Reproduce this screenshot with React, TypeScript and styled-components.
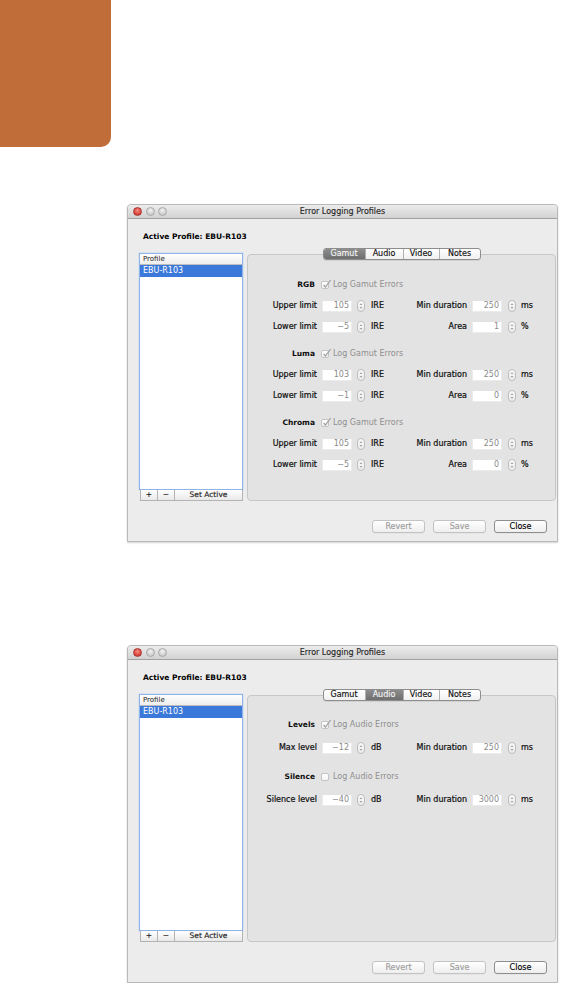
import React from 'react';
import styled, { createGlobalStyle } from 'styled-components';

const Global = createGlobalStyle`
  html, body { margin: 0; padding: 0; background: #fff; }
  body {
    font-family: "DejaVu Sans", Verdana, sans-serif;
    width: 567px; height: 983px; overflow: hidden;
  }
`;

const Page = styled.div`
  width: 567px;
  height: 983px;
  display: flex;
  flex-direction: column;
`;

const ChapterTab = styled.div`
  flex: none;
  width: 111px;
  height: 147px;
  background: #c06d3a;
  border-bottom-right-radius: 10px;
`;

const Win = styled.div<{ $top: number }>`
  flex: none;
  margin: ${(p) => p.$top}px 0 0 127px;
  width: 431px;
  height: 338px;
  box-sizing: border-box;
  border: 1px solid #b9b9b9;
  border-radius: 4px 4px 0 0;
  background: #ececec;
  box-shadow: 0 1px 2px rgba(0, 0, 0, 0.18);
  display: flex;
  flex-direction: column;
  overflow: hidden;
`;

const TitleBar = styled.div`
  flex: none;
  height: 13px;
  display: grid;
  grid-template-columns: 1fr auto 1fr;
  align-items: center;
  background: linear-gradient(#ececec, #d2d2d2);
  border-bottom: 1px solid #a2a2a2;
`;

const Lights = styled.div`
  display: flex;
  gap: 3.5px;
  padding-left: 5px;
`;

const Light = styled.span<{ $red?: boolean }>`
  width: 9px;
  height: 9px;
  box-sizing: border-box;
  border-radius: 50%;
  background: ${(p) =>
    p.$red
      ? 'radial-gradient(circle at 50% 35%, #f48a80, #d8403a 70%)'
      : 'radial-gradient(circle at 50% 35%, #f2f2f2, #cdcdcd 70%)'};
  border: 1px solid ${(p) => (p.$red ? '#a8322c' : '#a9a9a9')};
`;

const Title = styled.div`
  font-size: 8px;
  color: #2a2a2a;
  line-height: 13px;
  -webkit-text-stroke: 0.15px #2a2a2a;
`;

const Body = styled.div`
  flex: 1;
  display: flex;
  flex-direction: column;
  padding: 0 10px 0 11px;
`;

const ActiveProfile = styled.div`
  margin: 13px 0 0 4px;
  height: 10px;
  line-height: 10px;
  font-size: 7.5px;
  font-weight: bold;
  color: #000;
`;

const Main = styled.div`
  margin-top: 6px;
  display: grid;
  grid-template-columns: 104px 309px;
  column-gap: 4px;
  align-items: start;
`;

const ListColumn = styled.div`
  margin-top: 5px;
  display: flex;
  flex-direction: column;
`;

const ListBox = styled.div`
  height: 237px;
  box-sizing: border-box;
  border: 1px solid #8fb3e6;
  box-shadow: 0 0 0 0.5px #c5d8f2;
  background: #fff;
  display: flex;
  flex-direction: column;
`;

const ListHeader = styled.div`
  height: 10px;
  line-height: 10px;
  font-size: 7px;
  color: #222;
  padding-left: 3px;
  background: linear-gradient(#ffffff, #eeeeee);
  border-bottom: 1px solid #bdbdbd;
`;

const ListRow = styled.div<{ $selected?: boolean }>`
  height: 12px;
  line-height: 12px;
  font-size: 8px;
  padding-left: 3px;
  color: ${(p) => (p.$selected ? '#fff' : '#111')};
  background: ${(p) => (p.$selected ? '#3a78d9' : 'transparent')};
`;

const ListBar = styled.div`
  display: grid;
  grid-template-columns: 17px 17px 1fr;
  height: 11px;
  margin-left: 1px;
  box-sizing: border-box;
  border: 1px solid #b3b3b3;
  border-top: none;
  background: linear-gradient(#ffffff, #e9e9e9);
`;

const BarButton = styled.div<{ $last?: boolean }>`
  font-size: 7.5px;
  line-height: 10px;
  text-align: center;
  color: #222;
  border-right: ${(p) => (p.$last ? 'none' : '1px solid #b3b3b3')};
  -webkit-text-stroke: 0.15px #222;
`;

const TabColumn = styled.div`
  display: flex;
  flex-direction: column;
`;

const Segments = styled.div`
  position: relative;
  z-index: 1;
  align-self: center;
  display: flex;
  height: 12px;
  box-sizing: border-box;
  border: 1px solid #8d8d8d;
  border-radius: 3px;
  overflow: hidden;
  background: linear-gradient(#ffffff, #f0f0f0);
  box-shadow: 0 1px 0 rgba(0, 0, 0, 0.08);
`;

const Segment = styled.div<{ $w: number; $active?: boolean; $last?: boolean }>`
  width: ${(p) => p.$w}px;
  box-sizing: border-box;
  text-align: center;
  font-size: 8px;
  line-height: 10px;
  color: ${(p) => (p.$active ? '#f4f4f4' : '#111')};
  -webkit-text-stroke: 0.15px ${(p) => (p.$active ? '#f4f4f4' : '#111')};
  background: ${(p) => (p.$active ? 'linear-gradient(#8d8d8d, #6e6e6e)' : 'transparent')};
  border-right: ${(p) => (p.$last ? 'none' : '1px solid #b0b0b0')};
`;

const Panel = styled.div`
  margin-top: -6px;
  height: 247px;
  box-sizing: border-box;
  border: 1px solid #c7c7c7;
  border-radius: 4px;
  background: #e3e3e3;
  padding-top: 19px;
  display: flex;
  flex-direction: column;
`;

const Section = styled.div<{ $gap: number }>`
  display: flex;
  flex-direction: column;
  & + & { margin-top: ${(p) => p.$gap}px; }
`;

const Row = styled.div<{ $h: number }>`
  height: ${(p) => p.$h}px;
  display: flex;
  align-items: center;
`;

const Label = styled.span<{ $w: number; $bold?: boolean }>`
  flex: none;
  width: ${(p) => p.$w}px;
  text-align: right;
  font-size: ${(p) => (p.$bold ? '7.5px' : '8px')};
  font-weight: ${(p) => (p.$bold ? 'bold' : 'normal')};
  color: #0d0d0d;
  white-space: nowrap;
  -webkit-text-stroke: ${(p) => (p.$bold ? '0' : '0.2px #0d0d0d')};
`;

const CheckBox = styled.span`
  flex: none;
  position: relative;
  margin-left: 6px;
  width: 8px;
  height: 8px;
  box-sizing: border-box;
  border: 1px solid #c4c4c4;
  border-radius: 2px;
  background: linear-gradient(#ffffff, #f3f3f3);
  svg { position: absolute; left: 0; top: -3px; }
`;

const CheckText = styled.span`
  margin-left: 4px;
  font-size: 8px;
  color: #8f8f8f;
`;

const Input = styled.span<{ $ml: number }>`
  flex: none;
  margin-left: ${(p) => p.$ml}px;
  width: 30px;
  height: 12px;
  box-sizing: border-box;
  background: #fff;
  border: 1px solid #ebebeb;
  border-top-color: #e2e2e2;
  text-align: right;
  padding-right: 2px;
  font-size: 8px;
  line-height: 10px;
  color: #8a8a8a;
`;

const Stepper = styled.span<{ $ml: number }>`
  flex: none;
  margin-left: ${(p) => p.$ml}px;
  width: 8px;
  height: 12px;
  box-sizing: border-box;
  border: 1px solid #bdbdbd;
  border-radius: 4px;
  background: linear-gradient(#fafafa, #ececec);
  display: flex;
  align-items: center;
  justify-content: center;
`;

const Unit = styled.span<{ $w: number; $ml: number }>`
  flex: none;
  margin-left: ${(p) => p.$ml}px;
  width: ${(p) => p.$w}px;
  font-size: 8px;
  color: #0d0d0d;
  -webkit-text-stroke: 0.2px #0d0d0d;
`;

const Footer = styled.div`
  margin-top: 19px;
  display: flex;
  justify-content: flex-end;
  gap: 8px;
`;

const PushButton = styled.div<{ $enabled?: boolean }>`
  width: 53px;
  height: 13px;
  box-sizing: border-box;
  border: 1px solid ${(p) => (p.$enabled ? '#8e8e8e' : '#c3c3c3')};
  border-radius: 3px;
  background: linear-gradient(#ffffff, #eeeeee);
  text-align: center;
  font-size: 8px;
  line-height: 11px;
  color: ${(p) => (p.$enabled ? '#000' : '#9c9c9c')};
  -webkit-text-stroke: 0.15px ${(p) => (p.$enabled ? '#000' : '#9c9c9c')};
  box-shadow: 0 0.5px 0 rgba(0, 0, 0, 0.06);
`;

const Arrows = () => (
  <svg width="4" height="8" viewBox="0 0 4 8">
    <path d="M0.5 3 L2 1.3 L3.5 3 Z" fill="#a0a0a0" />
    <path d="M0.5 5 L2 6.7 L3.5 5 Z" fill="#a0a0a0" />
  </svg>
);

const Tick = () => (
  <svg width="10" height="10" viewBox="0 0 10 10">
    <path d="M1.6 5.8 L3.4 8 L8.6 1" fill="none" stroke="#9a9a9a" strokeWidth="1.1" />
  </svg>
);

type Field = { label: string; v1: string; u1: string; label2: string; v2: string; u2: string };
type Group = { title: string; check: string; checked: boolean; rows: Field[] };

const gamutGroups: Group[] = [
  {
    title: 'RGB', check: 'Log Gamut Errors', checked: true,
    rows: [
      { label: 'Upper limit', v1: '105', u1: 'IRE', label2: 'Min duration', v2: '250', u2: 'ms' },
      { label: 'Lower limit', v1: '−5', u1: 'IRE', label2: 'Area', v2: '1', u2: '%' },
    ],
  },
  {
    title: 'Luma', check: 'Log Gamut Errors', checked: true,
    rows: [
      { label: 'Upper limit', v1: '103', u1: 'IRE', label2: 'Min duration', v2: '250', u2: 'ms' },
      { label: 'Lower limit', v1: '−1', u1: 'IRE', label2: 'Area', v2: '0', u2: '%' },
    ],
  },
  {
    title: 'Chroma', check: 'Log Gamut Errors', checked: true,
    rows: [
      { label: 'Upper limit', v1: '105', u1: 'IRE', label2: 'Min duration', v2: '250', u2: 'ms' },
      { label: 'Lower limit', v1: '−5', u1: 'IRE', label2: 'Area', v2: '0', u2: '%' },
    ],
  },
];

const audioGroups: Group[] = [
  {
    title: 'Levels', check: 'Log Audio Errors', checked: true,
    rows: [{ label: 'Max level', v1: '−12', u1: 'dB', label2: 'Min duration', v2: '250', u2: 'ms' }],
  },
  {
    title: 'Silence', check: 'Log Audio Errors', checked: false,
    rows: [{ label: 'Silence level', v1: '−40', u1: 'dB', label2: 'Min duration', v2: '3000', u2: 'ms' }],
  },
];

const tabs = [
  { name: 'Gamut', w: 42 },
  { name: 'Audio', w: 38 },
  { name: 'Video', w: 36 },
  { name: 'Notes', w: 40 },
];

type WindowProps = {
  top: number;
  active: string;
  groups: Group[];
  headerH: number;
  rowH: number;
  gap: number;
};

const ProfilesWindow = ({ top, active, groups, headerH, rowH, gap }: WindowProps) => (
  <Win $top={top}>
    <TitleBar>
      <Lights>
        <Light $red />
        <Light />
        <Light />
      </Lights>
      <Title>Error Logging Profiles</Title>
      <span />
    </TitleBar>
    <Body>
      <ActiveProfile>Active Profile: EBU-R103</ActiveProfile>
      <Main>
        <ListColumn>
          <ListBox>
            <ListHeader>Profile</ListHeader>
            <ListRow $selected>EBU-R103</ListRow>
          </ListBox>
          <ListBar>
            <BarButton>+</BarButton>
            <BarButton>−</BarButton>
            <BarButton $last>Set Active</BarButton>
          </ListBar>
        </ListColumn>
        <TabColumn>
          <Segments>
            {tabs.map((t, i) => (
              <Segment key={t.name} $w={t.w} $active={t.name === active} $last={i === tabs.length - 1}>
                {t.name}
              </Segment>
            ))}
          </Segments>
          <Panel>
            {groups.map((g) => (
              <Section key={g.title} $gap={gap}>
                <Row $h={headerH}>
                  <Label $w={67} $bold>{g.title}</Label>
                  <CheckBox>{g.checked && <Tick />}</CheckBox>
                  <CheckText>{g.check}</CheckText>
                </Row>
                {g.rows.map((r) => (
                  <Row key={r.label} $h={rowH}>
                    <Label $w={69}>{r.label}</Label>
                    <Input $ml={5}>{r.v1}</Input>
                    <Stepper $ml={5}><Arrows /></Stepper>
                    <Unit $ml={6} $w={40}>{r.u1}</Unit>
                    <Label $w={56}>{r.label2}</Label>
                    <Input $ml={5}>{r.v2}</Input>
                    <Stepper $ml={6}><Arrows /></Stepper>
                    <Unit $ml={5} $w={20}>{r.u2}</Unit>
                  </Row>
                ))}
              </Section>
            ))}
          </Panel>
        </TabColumn>
      </Main>
      <Footer>
        <PushButton>Revert</PushButton>
        <PushButton>Save</PushButton>
        <PushButton $enabled>Close</PushButton>
      </Footer>
    </Body>
  </Win>
);

export default function App() {
  return (
    <Page>
      <Global />
      <ChapterTab />
      <ProfilesWindow top={57} active="Gamut" groups={gamutGroups} headerH={21} rowH={21} gap={9} />
      <ProfilesWindow top={103} active="Audio" groups={audioGroups} headerH={19} rowH={27} gap={6} />
    </Page>
  );
}
